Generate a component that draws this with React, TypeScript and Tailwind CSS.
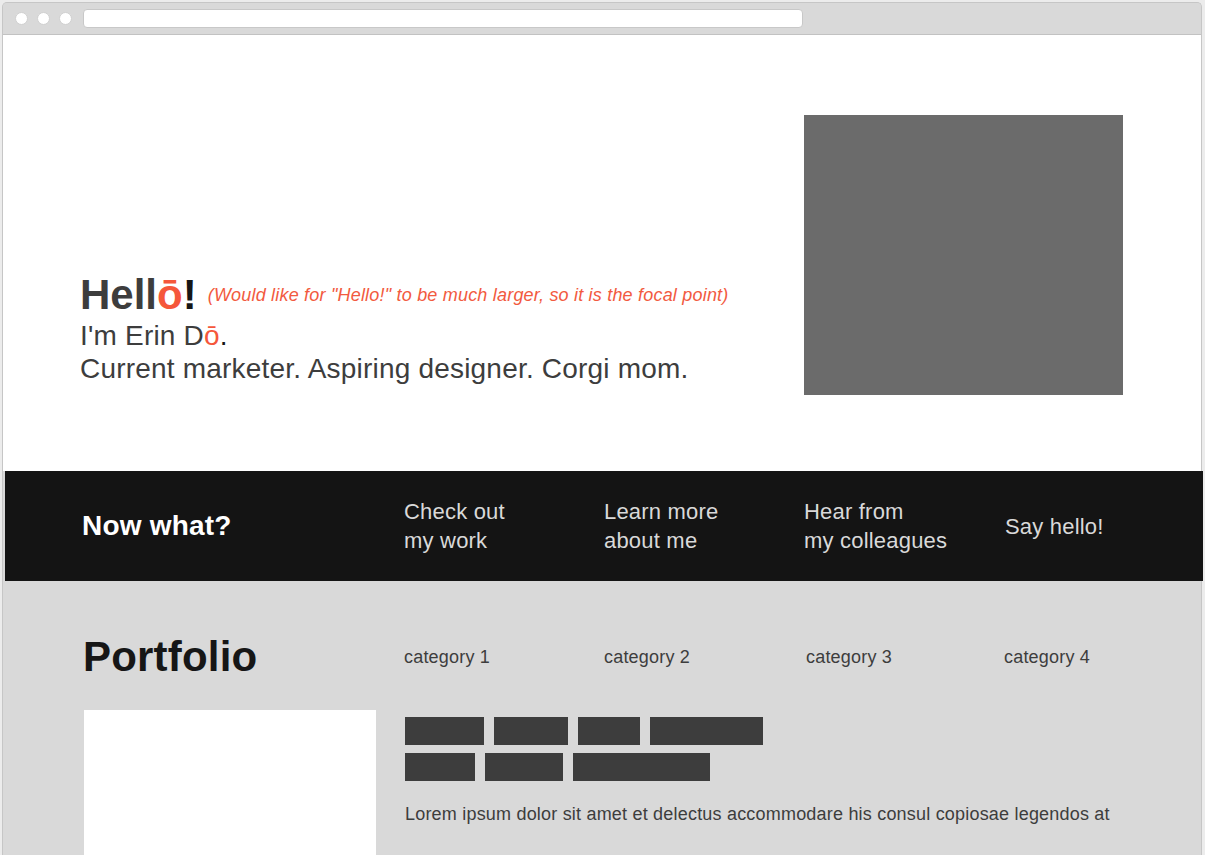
import React from "react";

const navLinks = [
  { lines: ["Check out", "my work"], w: "w-[200px]" },
  { lines: ["Learn more", "about me"], w: "w-[200px]" },
  { lines: ["Hear from", "my colleagues"], w: "w-[201px]" },
  { lines: ["Say hello!"], w: "" },
];

const categories = [
  { label: "category 1", cls: "w-[200px]" },
  { label: "category 2", cls: "w-[200px]" },
  { label: "category 3", cls: "w-[200px] pl-[2px]" },
  { label: "category 4", cls: "" },
];

const tagRows = [
  ["w-[79px]", "w-[74px]", "w-[62px]", "w-[113px]"],
  ["w-[70px]", "w-[78px]", "w-[137px]"],
];

const App = () => {
  return (
    <div className="h-[855px] overflow-hidden bg-[#ececec] pl-[2px] pr-[3px] pt-[2px] font-['Liberation_Sans',Arial,sans-serif] tracking-[0.2px]">
      <div className="h-[853px] rounded-t-[5px] border border-b-0 border-[#c6c6c6] bg-[#d9d9d9]">
        {/* window chrome */}
        <div className="flex h-[32px] items-center rounded-t-[4px] border-b border-[#c2c2c2] bg-[#d9d9d9] pl-[12px]">
          <div className="flex gap-[9px]">
            <span className="block h-[13px] w-[13px] rounded-full border border-[#d0d0d0] bg-white" />
            <span className="block h-[13px] w-[13px] rounded-full border border-[#d0d0d0] bg-white" />
            <span className="block h-[13px] w-[13px] rounded-full border border-[#d0d0d0] bg-white" />
          </div>
          <div className="ml-[11px] h-[19px] w-[720px] rounded-[4px] border border-[#c8c8c8] bg-white" />
        </div>

        {/* hero */}
        <section className="flex h-[436px] justify-between bg-white pl-[77px] pr-[78px]">
          <div className="mt-[236px] text-[#3d3d3d]">
            <div className="flex items-center">
              <h1 className="text-[42px] font-bold leading-[48px] tracking-normal">
                Hell<span className="text-[#f5573b]">ō</span>
                <span className="text-[#161616]">!</span>
              </h1>
              <p className="ml-[11px] text-[18px] italic text-[#f25a40]">
                (Would like for "Hello!" to be much larger, so it is the focal point)
              </p>
            </div>
            <p className="text-[28px] leading-[33px]">
              I'm Erin D<span className="text-[#f5573b]">ō</span>
              <span className="text-[#161616]">.</span>
            </p>
            <p className="text-[28px] leading-[33px]">
              Current marketer. Aspiring designer. Corgi mom.
            </p>
          </div>
          <div className="mt-[80px] h-[280px] w-[319px] bg-[#6b6b6b]" />
        </section>

        {/* now what band */}
        <nav className="-mr-[2px] ml-[2px] flex h-[110px] items-center bg-[#141414] pl-[77px]">
          <h2 className="w-[322px] shrink-0 text-[28px] font-bold text-white">Now what?</h2>
          {navLinks.map((item) => (
            <a
              key={item.lines[0]}
              className={`shrink-0 text-[22px] leading-[29px] text-[#d9d9d9] ${item.w}`}
            >
              {item.lines.map((l) => (
                <div key={l}>{l}</div>
              ))}
            </a>
          ))}
        </nav>

        {/* portfolio */}
        <section className="bg-[#d9d9d9] pl-[80px] pt-[52px]">
          <div className="flex items-center">
            <h2 className="w-[321px] shrink-0 text-[42px] font-bold leading-[48px] text-[#161616]">
              Portfolio
            </h2>
            {categories.map((c) => (
              <span
                key={c.label}
                className={`shrink-0 text-[18px] leading-[24px] text-[#3d3d3d] ${c.cls}`}
              >
                {c.label}
              </span>
            ))}
          </div>

          <div className="mt-[29px] flex">
            <div className="ml-[1px] h-[200px] w-[292px] bg-white" />
            <div className="ml-[29px] pt-[7px]">
              <div className="flex flex-col gap-[8px]">
                {tagRows.map((row, r) => (
                  <div key={r} className="flex gap-[10px]">
                    {row.map((w, i) => (
                      <span key={i} className={`block h-[28px] bg-[#3d3d3d] ${w}`} />
                    ))}
                  </div>
                ))}
              </div>
              <p className="mt-[21px] text-[18px] leading-[24px] text-[#3d3d3d]">
                Lorem ipsum dolor sit amet et delectus accommodare his consul copiosae legendos at
              </p>
            </div>
          </div>
        </section>
      </div>
    </div>
  );
};

export default App;
